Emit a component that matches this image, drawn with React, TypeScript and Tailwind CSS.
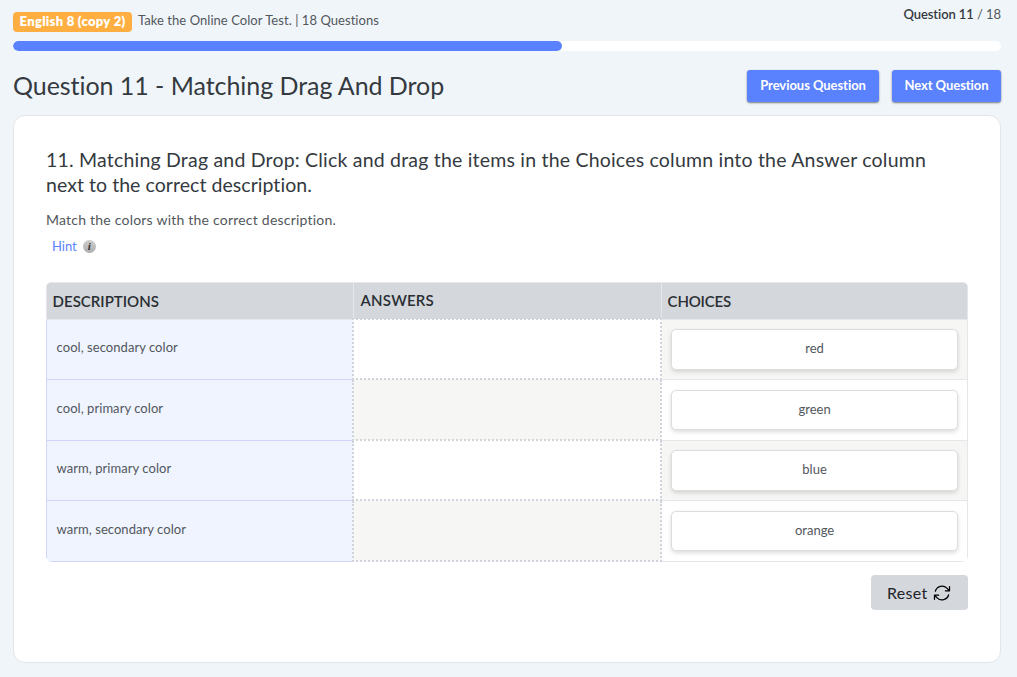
import { HiOutlineArrowPath } from "react-icons/hi2";

const descriptions = [
  "cool, secondary color",
  "cool, primary color",
  "warm, primary color",
  "warm, secondary color",
];

const choices = ["red", "green", "blue", "orange"];

const TopBar = () => {
  return (
    <header>
      <div className="flex justify-between h-[41px]">
        <div className="flex items-center gap-1.5 mt-3 h-5">
          <span className="flex items-center justify-center w-[119px] h-5 pb-px rounded bg-[#ffaf42] text-white font-extrabold text-[13px] tracking-[0.3px] whitespace-nowrap">
            English 8 (copy 2)
          </span>
          <span className="pb-0.5 text-[13px] tracking-[0.05px] text-[#52575c] whitespace-nowrap">
            Take the Online Color Test. | 18 Questions
          </span>
        </div>
        <p className="mt-1 text-[13px] leading-5 tracking-[-0.08px] text-[#52575c]">
          <span className="font-semibold text-[#343a40]">Question 11</span> / 18
        </p>
      </div>
      {/* progress */}
      <div className="h-2.5 rounded-full bg-white overflow-hidden">
        <div className="h-full w-[549px] rounded-full bg-[#5a82ff]" />
      </div>
    </header>
  );
};

const MatchTable = () => {
  return (
    <div className="mt-[23.6px] -ml-[0.4px] rounded-md overflow-hidden">
      <table className="w-full table-fixed border-collapse">
        <colgroup>
          <col className="w-[307px]" />
          <col className="w-[308px]" />
          <col />
        </colgroup>
        <thead>
          <tr className="h-[37px] bg-[#d4d7dc] text-left text-[15px] text-[#292e33]">
            <th className="border border-[#e5e7eb] px-1.5 pt-px font-semibold">
              DESCRIPTIONS
            </th>
            <th className="border border-[#e5e7eb] px-[7px] pb-px font-semibold tracking-[0.2px]">
              ANSWERS
            </th>
            <th className="border border-[#e5e7eb] px-1.5 pt-px font-semibold tracking-[-0.2px]">
              CHOICES
            </th>
          </tr>
        </thead>
        <tbody>
          {choices.map((choice, index) => (
            <tr
              key={choice}
              className={`text-[13px] text-[#52575c] ${
                index % 2 ? "h-[61px]" : "h-[60px]"
              }`}
            >
              <td className="border border-[#cfd4fa] bg-[#eff4ff] px-2.5 pb-0.5 tracking-[0.05px]">
                {descriptions[index]}
              </td>
              <td
                className={`border-2 border-dotted border-[#d1d3dc] ${
                  index % 2 ? "bg-[#f6f6f5]" : "bg-white"
                }`}
              />
              <td
                className={`border border-[#e5e7eb] px-[9px] py-0 ${
                  index % 2 ? "bg-white" : "bg-[#f6f6f5]"
                }`}
              >
                <div
                  className={`flex items-center justify-center rounded-[5px] border border-[#dcdddf] bg-white shadow-[0_2px_4px_rgba(0,0,0,0.14)] cursor-move ${
                    index % 2 ? "h-10" : "h-[41px] pb-px"
                  }`}
                >
                  {choice}
                </div>
              </td>
            </tr>
          ))}
        </tbody>
      </table>
    </div>
  );
};

export default function App() {
  return (
    <div className="h-[677px] bg-[#f0f5fa] pl-[13px] pr-4 font-['Lato',sans-serif] [font-variant-ligatures:none]">
      <TopBar />

      {/* title */}
      <div className="flex items-start justify-between mt-[19px] h-[33px]">
        <h1 className="text-[25px] leading-[31px] tracking-[-0.05px] text-[#343a40] whitespace-nowrap">
          Question 11 - Matching Drag And Drop
        </h1>
        <div className="flex gap-[13px] text-[13px] font-bold text-white">
          <button className="w-[132px] h-8 rounded-[3px] tracking-[-0.05px] bg-[#5a82ff] shadow-[0_1px_2px_rgba(0,0,0,0.5)]">
            Previous Question
          </button>
          <button className="w-[109px] h-8 rounded-[3px] tracking-[-0.05px] bg-[#5a82ff] shadow-[0_1px_2px_rgba(0,0,0,0.5)]">
            Next Question
          </button>
        </div>
      </div>

      {/* question card */}
      <main className="mt-3 h-[548px] rounded-xl border border-[#e2e6ea] bg-white px-8 pt-[31px]">
        <h2 className="text-[19.5px] leading-[25px] tracking-[0.2px] text-[#343a40] whitespace-nowrap">
          11. Matching Drag and Drop: Click and drag the items in the Choices column into the Answer column
          <br />
          <span className="tracking-[0.05px]">next to the correct description.</span>
        </h2>
        <p className="mt-3 text-[14px] leading-[22px] tracking-[0.22px] text-[#52575c]">
          Match the colors with the correct description.
        </p>
        <div className="flex items-center gap-1.5 mt-[5px] ml-1.5 h-[22px] text-[13px] text-[#5a82ff]">
          <span>Hint</span>
          <span className="flex items-center justify-center size-[13px] mb-px rounded-full bg-linear-to-b from-[#cfcfcf] to-[#adadad] font-['Liberation_Serif',serif] text-[11px] font-bold italic leading-none text-[#333]">
            i
          </span>
        </div>

        <MatchTable />

        <div className="flex justify-end mt-[13px]">
          <button className="flex items-center gap-1 w-[97px] h-[35px] rounded pl-4 bg-[#d4d7dc] text-[16px] tracking-[0.3px] text-[#1f2428]">
            Reset
            <HiOutlineArrowPath className="size-5 text-black" />
          </button>
        </div>
      </main>
    </div>
  );
}
